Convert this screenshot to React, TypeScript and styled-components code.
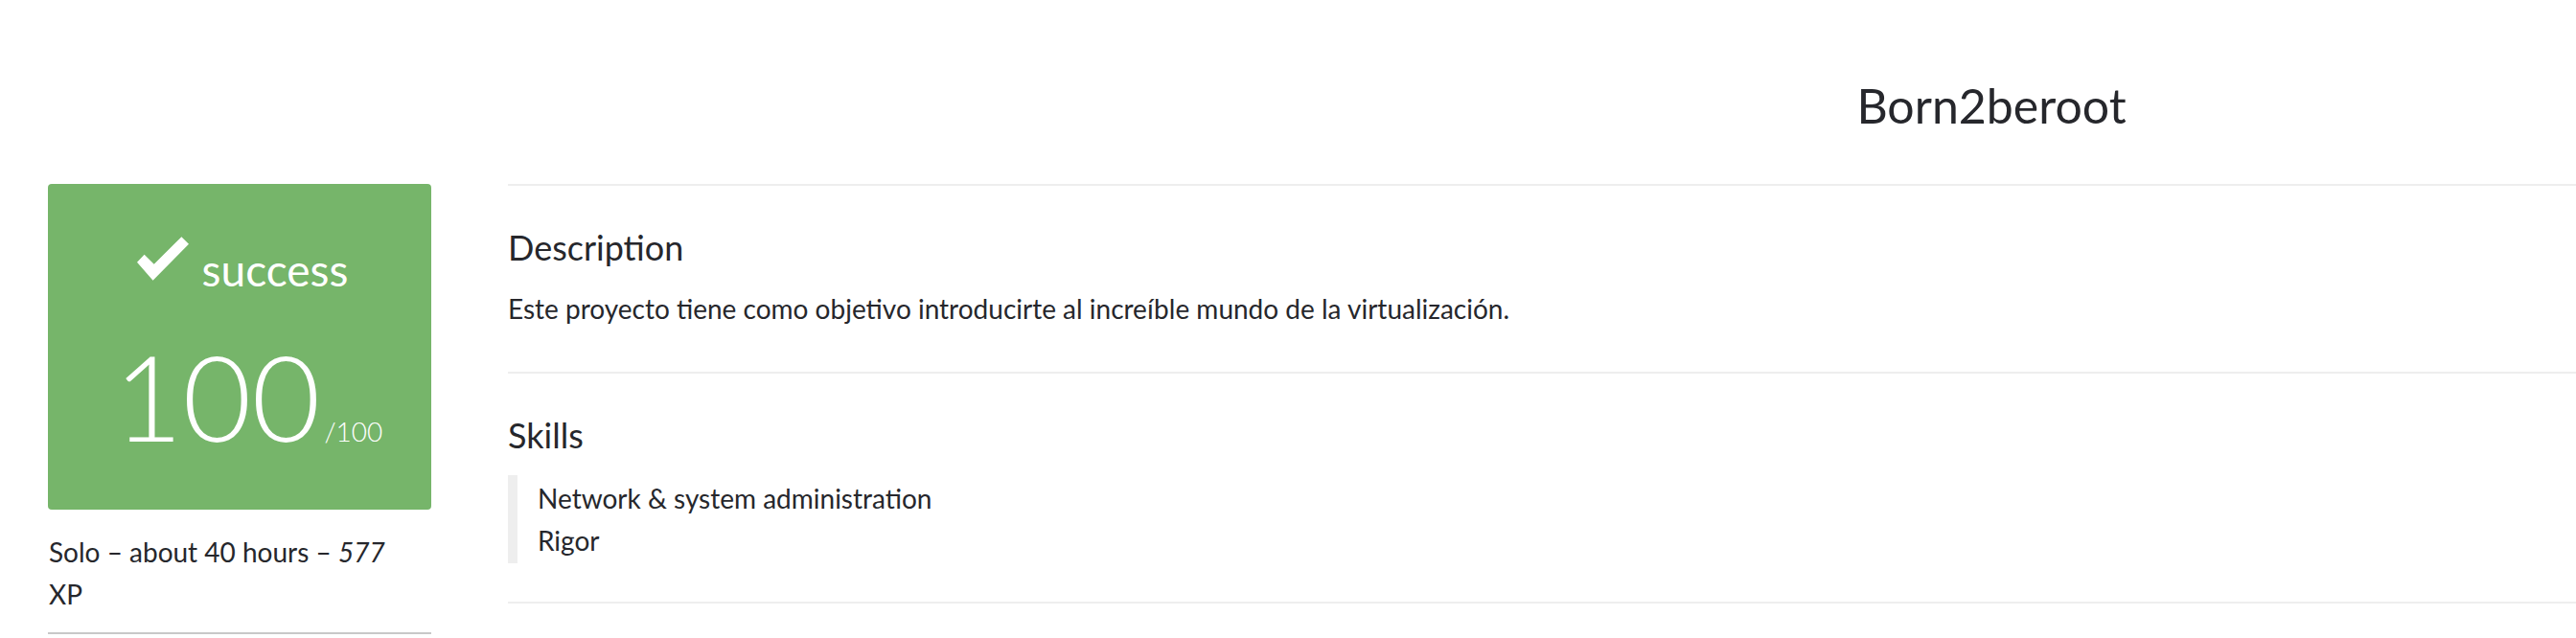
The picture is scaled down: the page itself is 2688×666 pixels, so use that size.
import React from "react";
import styled, { createGlobalStyle } from "styled-components";

const Global = createGlobalStyle`
  html, body {
    margin: 0;
    padding: 0;
    background: #ffffff;
    overflow: hidden;
  }
  body {
    font-family: "Lato", "Noto Sans", sans-serif;
    color: #26272c;
  }
`;

const Page = styled.div`
  display: flex;
  align-items: flex-start;
  padding-left: 50px;
  width: 3800px;
`;

const Sidebar = styled.aside`
  width: 400px;
  flex: none;
  margin-top: 192px;
  display: flex;
  flex-direction: column;
`;

const ScoreBox = styled.div`
  height: 340px;
  background: #76b56a;
  border-radius: 4px;
  color: #ffffff;
  display: flex;
  flex-direction: column;
  align-items: center;
  box-sizing: border-box;
  padding-top: 55px;
`;

const Status = styled.div`
  display: flex;
  align-items: flex-end;
  gap: 14px;
  font-size: 46px;
  line-height: 1;
  margin-left: 6px;
`;

const StatusLabel = styled.span`
  position: relative;
  top: -6px;
`;

const Mark = styled.span`
  display: flex;
  height: 58px;
  margin-bottom: 6px;
`;

const ScoreLine = styled.div`
  display: flex;
  align-items: baseline;
  margin-top: 40px;
  margin-left: 18px;
`;

const ScoreValue = styled.span`
  font-size: 124px;
  font-weight: 300;
  line-height: 1;
`;

const ScoreMax = styled.span`
  font-size: 28px;
  font-weight: 300;
  margin-left: 4px;
`;

const Meta = styled.p`
  margin: 22px 0 0 1px;
  max-width: 380px;
  font-size: 28px;
  line-height: 44px;
`;

const Italic = styled.i`
  font-style: italic;
`;

const SideRule = styled.hr`
  margin: 18px 0 0;
  border: none;
  height: 2px;
  background: #c8c8c8;
`;

const Main = styled.main`
  margin-left: 80px;
  width: 3096px;
  flex: none;
`;

const Header = styled.header`
  height: 194px;
  box-sizing: border-box;
  border-bottom: 2px solid #eeeeee;
  display: flex;
  justify-content: center;
  align-items: center;
  padding-top: 28px;
`;

const Title = styled.h1`
  margin: 0;
  font-size: 50px;
  font-weight: 400;
  line-height: 1;
`;

const Section = styled.section<{ $height: number }>`
  height: ${(p) => p.$height}px;
  box-sizing: border-box;
  border-bottom: 2px solid #eeeeee;
  padding-top: 42px;
`;

const SectionTitle = styled.h2`
  margin: 0;
  font-size: 36px;
  font-weight: 400;
  line-height: 44px;
`;

const Text = styled.p`
  margin: 20px 0 0;
  font-size: 28px;
  line-height: 44px;
`;

const SkillList = styled.ul`
  list-style: none;
  margin: 20px 0 0;
  padding: 2px 0 2px 21px;
  border-left: 10px solid #eeeeee;
`;

const Skill = styled.li`
  font-size: 28px;
  line-height: 44px;
`;

const Check = () => (
  <svg width="54" height="46" viewBox="0 0 163 138" fill="#ffffff">
    <polygon points="23,56 53.5,86.5 140,0 163,23 50,138 0,80" />
  </svg>
);

export default function App() {
  return (
    <>
      <Global />
      <Page>
        <Sidebar>
          <ScoreBox>
            <Status>
              <Mark>
                <Check />
              </Mark>
              <StatusLabel>success</StatusLabel>
            </Status>
            <ScoreLine>
              <ScoreValue>100</ScoreValue>
              <ScoreMax>/100</ScoreMax>
            </ScoreLine>
          </ScoreBox>
          <Meta>
            Solo – about 40 hours – <Italic>577</Italic> XP
          </Meta>
          <SideRule />
        </Sidebar>
        <Main>
          <Header>
            <Title>Born2beroot</Title>
          </Header>
          <Section $height={196}>
            <SectionTitle>Description</SectionTitle>
            <Text>
              Este proyecto tiene como objetivo introducirte al increíble mundo de la
              virtualización.
            </Text>
          </Section>
          <Section $height={240}>
            <SectionTitle>Skills</SectionTitle>
            <SkillList>
              <Skill>Network &amp; system administration</Skill>
              <Skill>Rigor</Skill>
            </SkillList>
          </Section>
        </Main>
      </Page>
    </>
  );
}
